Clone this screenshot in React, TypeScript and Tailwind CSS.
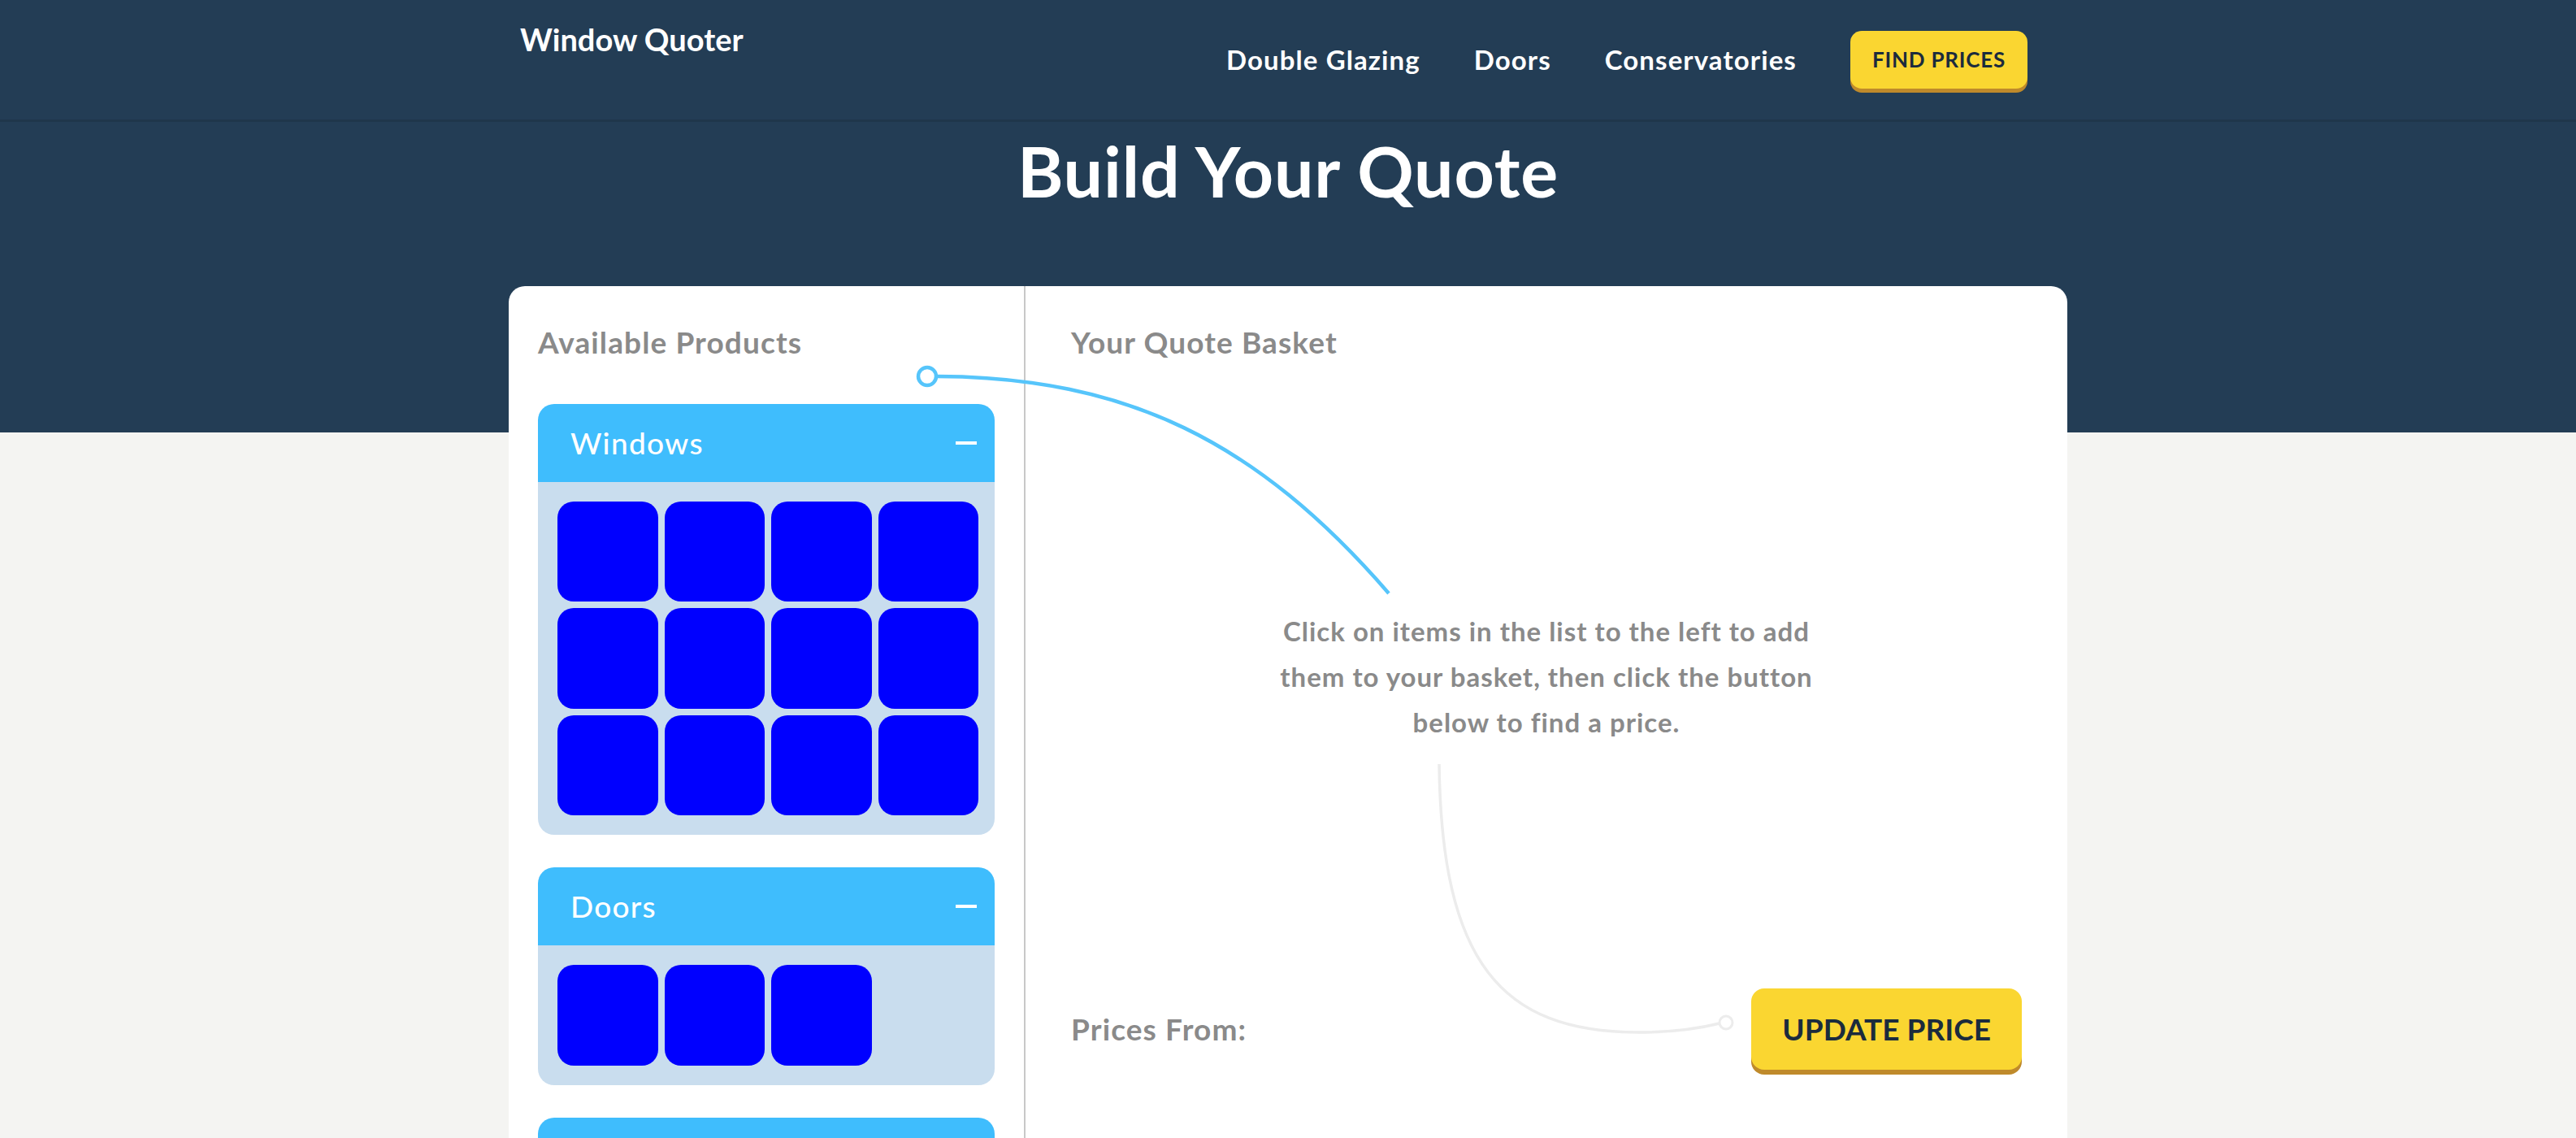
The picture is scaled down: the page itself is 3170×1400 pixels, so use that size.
const windows = Array.from({ length: 12 });
const doors = Array.from({ length: 3 });

function Panel({ title, count }: { title: string; count: number }) {
  return (
    <div className="rounded-[20px] overflow-hidden mb-[40px]">
      <div className="h-[96px] bg-[#3fbdfd] flex items-center justify-between pl-[40px] pr-[22px]">
        <span className="text-white text-[37px] font-medium tracking-[0.035em]">{title}</span>
        <span className="block w-[26px] h-[4px] bg-white" />
      </div>
      <div className="bg-[#c9ddee] pt-6 pb-6 pl-6 pr-5 grid grid-cols-4 gap-2">
        {Array.from({ length: count }).map((_, i) => (
          <div key={i} className="aspect-square rounded-[20px] bg-[#0000ff]" />
        ))}
      </div>
    </div>
  );
}

export default function App() {
  return (
    <div className="min-h-screen bg-[#f4f4f2] font-['Lato',sans-serif]">
      {/* Header */}
      <div className="bg-[#233d55] h-[532px]">
        <nav className="h-[150px] border-b-[3px] border-[#1f364b]">
          <div className="w-[1918px] mx-auto flex justify-between pl-[14px] pr-[49px]">
            <a href="#" className="pt-[20px] text-white text-[38px] font-bold">
              Window Quoter
            </a>
            <div className="flex items-center gap-[66px] pt-[38px]">
              <a href="#" className="text-white text-[33px] font-bold tracking-[0.033em]">Double Glazing</a>
              <a href="#" className="text-white text-[33px] font-bold tracking-[0.033em]">Doors</a>
              <a href="#" className="text-white text-[33px] font-bold tracking-[0.033em]">Conservatories</a>
              <button className="h-[71px] px-[27px] rounded-[14px] bg-[#fad631] shadow-[0_5px_0_#bf8a2b] text-[#1b2b3d] text-[26px] font-bold tracking-[0.03em]">
                FIND PRICES
              </button>
            </div>
          </div>
        </nav>
        <h1 className="text-center text-white text-[86px] font-bold leading-none tracking-[0.01em] mt-[17px]">
          Build Your Quote
        </h1>
      </div>

      {/* Builder card */}
      <div className="relative w-[1918px] mx-auto -mt-[180px] bg-white rounded-[20px] flex">
        <div className="w-[636px] shrink-0 border-r-2 border-[#c8c8c8] px-[36px] pt-[41px]">
          <h2 className="text-[#8a8a8a] text-[37px] font-bold tracking-[0.03em]">Available Products</h2>
          <div className="mt-[48px]">
            <Panel title="Windows" count={windows.length} />
            <Panel title="Doors" count={doors.length} />
            <Panel title="Conservatories" count={4} />
          </div>
        </div>

        <div className="flex-1 px-[56px] pt-[41px] flex flex-col">
          <h2 className="text-[#8a8a8a] text-[37px] font-bold tracking-[0.03em]">Your Quote Basket</h2>
          <p className="mt-[299px] mx-auto max-w-[690px] text-center text-[#8a8a8a] text-[33px] font-bold tracking-[0.03em] leading-[56px]">
            Click on items in the list to the left to add them to your basket, then click the button below to find a price.
          </p>
          <div className="mt-[300px] flex items-center justify-between">
            <span className="text-[#8a8a8a] text-[37px] font-bold tracking-[0.03em]">Prices From:</span>
            <button className="h-[100px] px-[38px] rounded-[16px] bg-[#fad631] shadow-[0_6px_0_#bf8a2b] text-[#1b2b3d] text-[37px] font-bold">
              UPDATE PRICE
            </button>
          </div>
        </div>

        {/* connector guides */}
        <svg className="absolute left-0 top-0 pointer-events-none" width="1918" height="1100" fill="none">
          <path d="M527 111 C760 112 920 190 1083 378" stroke="#56c5fb" strokeWidth="4.5" />
          <circle cx="515" cy="111" r="11" stroke="#56c5fb" strokeWidth="4.5" fill="white" />
          <path d="M1145 588 C1148 830 1220 918 1390 918 C1440 918 1470 912 1490 907" stroke="#ececec" strokeWidth="3.5" />
          <circle cx="1498" cy="906" r="8" stroke="#ececec" strokeWidth="3" fill="white" />
        </svg>
      </div>
    </div>
  );
}
